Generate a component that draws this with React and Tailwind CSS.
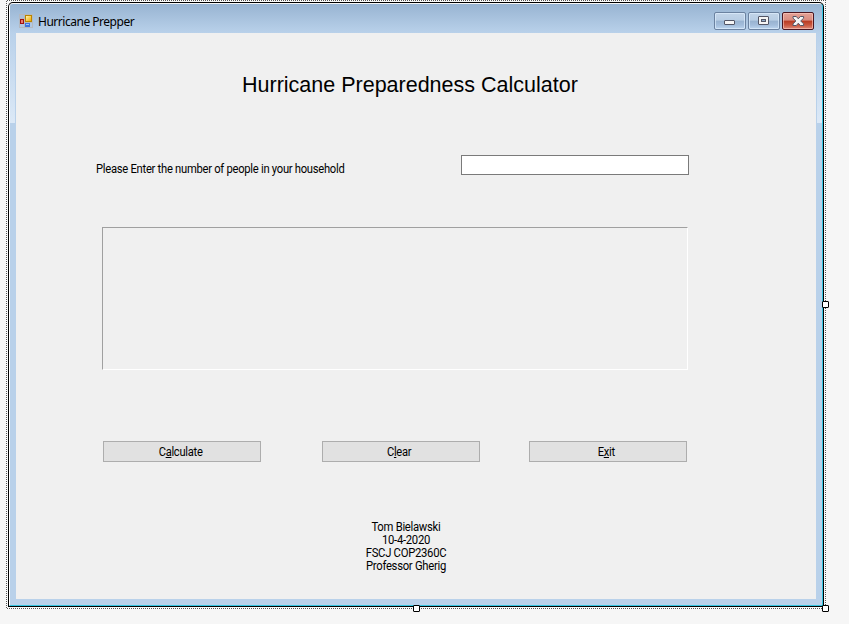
import React from 'react';

const bodyFont = "font-['Roboto','Liberation_Sans',sans-serif] text-[12px] leading-[13px] tracking-[-0.3px]";

function FormIcon() {
  return (
    <svg width="14" height="14" viewBox="0 0 14 14" shapeRendering="crispEdges">
      <defs>
        <linearGradient id="gold" x1="0" y1="0" x2="1" y2="1">
          <stop offset="0" stopColor="#fff3b0" />
          <stop offset="1" stopColor="#f0a800" />
        </linearGradient>
      </defs>
      <rect x="0" y="0" width="14" height="14" fill="#b4b9c0" />
      <rect x="1" y="1" width="4" height="3" fill="#a9bfd9" />
      <rect x="1" y="10" width="4" height="3" fill="#b0c8e4" />
      <path d="M1 5h4v5H1z" fill="#a01010" />
      <path d="M2 6h2v3H2z" fill="#e8786a" />
      <path d="M6 1h7v7H6z" fill="#b98500" />
      <path d="M7 2h5v5H7z" fill="url(#gold)" />
      <rect x="6" y="9" width="5" height="4" fill="#3e74dc" />
      <rect x="7" y="10" width="3" height="1" fill="#9cc0ff" />
      <rect x="11" y="9" width="2" height="4" fill="#b0c8e4" />
    </svg>
  );
}

function CaptionButton({ children, close }) {
  return (
    <div
      className={
        close
          ? 'flex h-[18px] w-8 items-center justify-center rounded-[2px] border border-[#4a1620] bg-[linear-gradient(#e3a196_0%,#d98c80_45%,#b83b22_50%,#c9573f_75%,#dc8a78_100%)] shadow-[inset_0_0_0_1px_rgba(255,205,195,0.6)]'
          : 'flex h-[18px] w-8 items-center justify-center rounded-[2px] border border-[#6b82a0] bg-[linear-gradient(#c3d5e9_0%,#b8cde4_45%,#98b3d0_50%,#a3bddb_75%,#bcd5ee_100%)] shadow-[inset_0_0_0_1px_rgba(225,240,255,0.65)]'
      }
    >
      {children}
    </div>
  );
}

function TitleBar() {
  return (
    <header className="flex h-[29px] bg-[linear-gradient(#98b4d2,#b9d1ea)] pr-[8px] pl-[9px]">
      <div className="pt-[10px]"><FormIcon /></div>
      <div className="ml-[5px] pt-[10px] font-['Noto_Sans','Open_Sans',sans-serif] text-[12px] leading-4 tracking-[-0.48px] whitespace-nowrap text-black">
        Hurricane Prepper
      </div>
      <div className="ml-auto flex gap-[2px] pt-[8px]">
        <CaptionButton>
          <svg width="12" height="6" viewBox="0 0 12 6" className="mt-[3px]">
            <rect x="0.5" y="0.5" width="10" height="4" rx="0.5" fill="#f5f5f5" stroke="#535666" />
          </svg>
        </CaptionButton>
        <CaptionButton>
          <svg width="12" height="10" viewBox="0 0 12 10">
            <rect x="0.5" y="0.5" width="10" height="8" rx="0.5" fill="#f5f5f5" stroke="#535666" />
            <rect x="3.5" y="3.5" width="4" height="2" fill="#91abc8" stroke="#535666" />
          </svg>
        </CaptionButton>
        <CaptionButton close>
          <svg width="13" height="11" viewBox="0 0 13 11">
            <path d="M1 .5h3.3l2 2.3 2-2.3h3.3v1.7L8.7 5l2.9 2.8v1.7H8.3l-2-2.3-2 2.3H1V7.8L3.9 5 1 2.2z" fill="#f5f5f5" stroke="#535666" />
          </svg>
        </CaptionButton>
      </div>
    </header>
  );
}

function FormButton({ children }) {
  return (
    <button className={`flex h-[21px] w-[158px] items-center justify-center border border-[#adadad] bg-[#e1e1e1] pr-[3px] text-black ${bodyFont}`}>
      <span className="block scale-x-[0.93] pt-px">{children}</span>
    </button>
  );
}

function Key({ children }) {
  return <span className="underline decoration-1 underline-offset-[1px]">{children}</span>;
}

function SideGlow({ className }) {
  return (
    <div className={`w-[6px] shrink-0 bg-[#b9d1ea] ${className}`}>
      <div className="h-[90px] bg-[linear-gradient(#b9d1ea,#dce9f7)]" />
    </div>
  );
}

export default function App() {
  return (
    <div className="relative h-[624px] w-[849px] overflow-hidden bg-[#f6f6f6] pl-[6px]">
      <div className="h-[609px] w-[820px] bg-[conic-gradient(#555_25%,#fff_0_50%,#555_0_75%,#fff_0)] bg-[length:2px_2px] p-px">
        <div className="h-[607px] bg-[#f8f8f8] p-px">
          <div className="h-[605px] w-[816px] rounded-t-[5px] bg-black p-px">
            <div className="flex h-[603px] flex-col overflow-hidden rounded-t-[4px] border-t border-r border-b border-l border-t-[#f6f6f6] border-r-[#35c5e0] border-b-[#35c5e0] border-l-white bg-[#b9d1ea]">
              <TitleBar />
              <div className="flex h-[566px]">
                <SideGlow className="pr-px" />
                <main className="h-[566px] w-[800px] bg-[#f0f0f0] text-black">
                  <h1 className="ml-[226px] pt-[39px] font-['Liberation_Sans',Arial,sans-serif] text-[21.5px] leading-[26px] whitespace-nowrap">
                    Hurricane Preparedness Calculator
                  </h1>
                  <div className="mt-[57px] flex h-5 pl-[80px]">
                    <label className={`w-[365px] pt-[8px] whitespace-nowrap ${bodyFont}`}>
                      <span className="block origin-left scale-x-[0.936]">
                        Please Enter the number of people in your household
                      </span>
                    </label>
                    <input className="h-5 w-[228px] border border-[#7a7a7a] bg-white" />
                  </div>
                  <div className="mt-[52px] ml-[86px] h-[143px] w-[586px] border border-t-[#a0a0a0] border-r-white border-b-white border-l-[#a0a0a0]" />
                  <div className="mt-[71px] flex h-[21px] pl-[87px]">
                    <FormButton>C<Key>a</Key>lculate</FormButton>
                    <div className="ml-[61px] flex"><FormButton>C<Key>l</Key>ear</FormButton></div>
                    <div className="ml-[49px] flex"><FormButton>E<Key>x</Key>it</FormButton></div>
                  </div>
                  <div className={`mt-[59px] ml-[340px] w-[100px] scale-x-[0.94] text-center ${bodyFont}`}>
                    <p>Tom Bielawski</p>
                    <p>10-4-2020</p>
                    <p>FSCJ COP2360C</p>
                    <p>Professor Gherig</p>
                  </div>
                </main>
                <SideGlow className="pl-px" />
              </div>
            </div>
          </div>
        </div>
      </div>
      <div className="absolute top-[301px] left-[822px] h-[7px] w-[7px] rounded-[1px] border border-black bg-white" />
      <div className="absolute top-[605px] left-[413px] h-[7px] w-[7px] rounded-[1px] border border-black bg-white" />
      <div className="absolute top-[605px] left-[822px] h-[7px] w-[7px] rounded-[1px] border border-black bg-white" />
    </div>
  );
}
